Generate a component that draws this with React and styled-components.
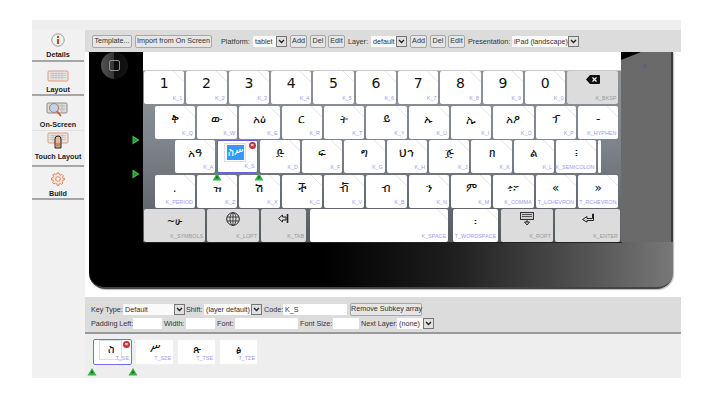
import React from "react";
import styled, { createGlobalStyle } from "styled-components";

const Global = createGlobalStyle`
  html, body { margin: 0; padding: 0; background: #fff; }
  body { font-family: "Liberation Sans", Arial, sans-serif; color: #333; }
`;
const Page = styled.div`
  width: 714px; height: 400px; padding: 20px 33px 22px 32px; box-sizing: border-box; overflow: hidden;
`;
const Shell = styled.div`
  display: flex; height: 358px; background: #eeeeee; padding-top: 10px; box-sizing: border-box;
`;
const Sidebar = styled.nav`
  width: 53px; flex: none; display: flex; flex-direction: column; background: #f1f1f1;
`;
const NavItem = styled.div`
  height: ${p => p.$h}px; box-sizing: border-box; display: flex; flex-direction: column; align-items: center;
  justify-content: flex-end; padding-bottom: ${p => p.$pb}px; margin-right: 1px;
  border-bottom: ${p => (p.$faint ? "1px solid #e2e2e2" : "2px solid #a6a6a6")};
  font-size: 7.2px; font-weight: bold; color: #222; white-space: nowrap; gap: 3px;
`;
const Main = styled.main`
  flex: 1; min-width: 0; display: flex; flex-direction: column;
`;
const Toolbar = styled.div`
  height: 22px; flex: none; background: #dcdcdc; display: flex; align-items: center; padding-left: 7px; box-sizing: border-box;
  font-size: 7.2px; color: #333; white-space: nowrap;
`;
const Btn = styled.button`
  font: inherit; color: #333; height: 11px; box-sizing: content-box; padding: 0; margin: 0 0 0 ${p => p.$ml || 0}px;
  width: ${p => p.$w}px; flex: none; background: #e6e6e6; border: 1px solid #a8a8a8; border-radius: 2px; line-height: 10px;
`;
const Label = styled.span`
  margin-left: ${p => p.$ml || 0}px; flex: none; width: ${p => p.$w ? p.$w + "px" : "auto"};
`;
const SelectBox = styled.span`
  margin-left: ${p => p.$ml || 0}px; width: ${p => p.$w}px; height: 11px; flex: none; display: flex; align-items: center;
  justify-content: space-between; background: #fafafa; box-sizing: border-box; font-size: 7.2px; padding-left: 2px;
`;
const SelectArrow = styled.span`
  width: 11px; height: 11px; flex: none; background: #e0e0e0; border: 1px solid #777; box-sizing: border-box;
  display: flex; align-items: center; justify-content: center;
`;
const Field = styled.span`
  margin-left: ${p => p.$ml || 0}px; width: ${p => p.$w}px; height: 11px; flex: none; background: #fff; box-sizing: border-box;
  padding-left: 2px; line-height: 11px; font-size: 7.2px;
`;
const Stage = styled.section`
  height: 245px; flex: none; background: #fff; padding: 0 8px 8px 4px; box-sizing: border-box;
`;
const Tablet = styled.div`
  position: relative; display: flex; height: 237px; box-sizing: border-box; padding-bottom: 45px;
  background: linear-gradient(90deg, #000 0, #000 40%, #1e1e1e 62%, #555 86%, #787878 100%);
  border-bottom: 2px solid #444; border-bottom-left-radius: 16px; border-bottom-right-radius: 16px;
  box-shadow: 1px 1px 1px #bbb;
`;
const LeftBezel = styled.div`
  width: 54px; flex: none; background: #000; padding-left: 12px; box-sizing: border-box;
`;
const HomeButton = styled.div`
  width: 27px; height: 27px; border-radius: 50%; display: flex; align-items: center; justify-content: center;
  background: linear-gradient(90deg, #525252 0, #333 50%, #0c0c0c 50%, #141414 100%);
`;
const HomeSquare = styled.div`
  width: 9px; height: 9px; border: 1px solid #8c8c8c; border-radius: 2px;
`;
const RightBezel = styled.div`
  position: relative; flex: 1; background: #6a6a6a; border-right: 2px solid #3c3c3c; display: flex; justify-content: center;
  padding-top: 12px; box-sizing: border-box;
  &::before {
    content: ""; position: absolute; left: 0; top: 0; width: 20px; height: 8px; background: #000;
    clip-path: polygon(0 0, 100% 0, 0 100%);
  }
`;
const Camera = styled.div`
  width: 4px; height: 4px; margin-right: 3px; border-radius: 50%; background: #5c6478;
`;
const Keyboard = styled.div`
  width: 478px; flex: none; box-sizing: border-box; padding: 19px 2px 1px 1px; display: flex; flex-direction: column; gap: 1.5px;
  background: linear-gradient(180deg, #fff 0, #fff 18px, #8f949b 19px, #7e848b 90px, #555a60 192px);
  box-shadow: 1px 1px 0 #222;
`;
const Row = styled.div`
  position: relative; display: flex; gap: 2px; height: 33px; padding-left: ${p => p.$offset || 0}px;
`;
const KeyCap = styled.div`
  position: relative; width: ${p => p.$w}px; height: 33px; flex: none; box-sizing: border-box; border-radius: 2px;
  margin-left: ${p => p.$ml || 0}px;
  background: ${p => (p.$special ? "#dcdcdc" : p.$spacer ? "#fff" : "linear-gradient(225deg, #fff 0, #fff 7px, #e8e8e8 7.5px, #e8e8e8 8px, #fff 8.5px)")};
  border: ${p => (p.$selected ? "1px solid #6464d8" : "none")};
  display: flex; justify-content: center; padding-top: ${p => (p.$digit ? 3 : 4)}px;
  font-family: "DejaVu Sans", "Noto Sans", sans-serif;
  font-size: ${p => (p.$digit ? 14 : p.$small ? 10 : 12)}px; line-height: 18px; color: #111;
`;
const KeyLabel = styled.span`
  position: absolute; right: 2px; bottom: 2px; font-family: "Liberation Sans", Arial, sans-serif; font-size: 5.4px; line-height: 7px;
  color: ${p => (p.$special ? "#9a9a9a" : "#9a9af0")}; white-space: nowrap;
`;
const Selected = styled.span`
  display: flex; align-items: center; justify-content: center; width: 22px; height: 19px; margin: -2px 5px 0 0;
  border: 1px solid #dedede; box-sizing: border-box; background: #fff; flex: none;
`;
const Highlight = styled.span`
  display: block; background: #3399ff; color: #fff; padding: 0 1px; font-size: 10px; line-height: 15px; white-space: nowrap;
`;
const Delete = styled.span`
  position: absolute; right: 1px; top: 1px; width: 7px; height: 7px; border-radius: 50%; background: #c0303c;
  color: #fff; font: bold 6px/7px "Liberation Sans", sans-serif; text-align: center;
`;
const SideMarker = styled.svg`
  position: absolute; left: -12px; top: ${p => p.$top}px;
`;
const UpMarker = styled.svg`
  position: absolute; left: ${p => p.$left}px; top: ${p => p.$top}px; z-index: 2;
`;
const Props = styled.section`
  height: 37px; flex: none; background: #dcdcdc; border-bottom: 2px solid #999; box-sizing: border-box; padding: 6px 0 0 6px;
  display: flex; flex-direction: column; gap: 2px; font-size: 7.2px; color: #333; white-space: nowrap;
`;
const PropRow = styled.div`
  display: flex; align-items: center; height: 12px;
`;
const Subkeys = styled.section`
  position: relative; flex: 1; display: flex; gap: 3px; padding: 5px 0 0 8px; align-items: flex-start;
`;
const SubKey = styled.div`
  position: relative; width: 39px; height: 26px; box-sizing: border-box; background: #fff; border-radius: 2px;
  border: ${p => (p.$selected ? "1px solid #6f6ff0" : "1px solid #f0f0f0")};
  display: flex; justify-content: center; padding-top: 4px; font: 11px/12px "DejaVu Sans", "Noto Sans", sans-serif; color: #111;
`;
const SubInner = styled.span`
  width: 23px; height: 20px; margin: -4px 4px 0 0; border: 1px solid #dedede; box-sizing: border-box; text-align: center; padding-top: 3px;
`;

const down = (
  <svg width="7" height="5" viewBox="0 0 7 5"><path d="M1 1l2.5 2.5L6 1" fill="none" stroke="#222" strokeWidth="1.4" /></svg>
);
const Sel = ({ w, ml, children }) => (
  <SelectBox $w={w} $ml={ml}>{children}<SelectArrow>{down}</SelectArrow></SelectBox>
);

const Right = ({ top }) => (
  <SideMarker $top={top} width="8" height="10" viewBox="0 0 8 10">
    <path d="M0.5 0.5L7.5 5L0.5 9.5Z" fill="#3fc04a" />
    <path d="M2 3.6L4.4 5L2 6.4Z" fill="#0d5" stroke="#1a6a22" strokeWidth=".6" />
  </SideMarker>
);
const Up = ({ left, top }) => (
  <UpMarker $left={left} $top={top} width="10" height="8" viewBox="0 0 10 8">
    <path d="M5 0L9.5 7.5H0.5Z" fill="#35b445" />
    <path d="M5 2.4L6.6 5.2H3.4Z" fill="#106a20" />
  </UpMarker>
);

const Kb = ({ color = "#e59a7a" }) => (
  <g fill="none">
    <rect x="1" y="1" width="20" height="10" rx="1" fill="#e4e4e4" stroke={color} />
    <path d="M3 3.5h16M3 5.5h16M3 7.5h16M6 2.5v7M9 2.5v7M12 2.5v7M15 2.5v7" stroke="#bdbdbd" strokeWidth=".7" />
  </g>
);
const InfoIcon = () => (
  <svg width="14" height="14" viewBox="0 0 14 14">
    <circle cx="7" cy="7" r="6.2" fill="#f5f5f5" stroke="#999" />
    <circle cx="7" cy="3.9" r="1.2" fill="#d8401c" />
    <path d="M7 6v5" stroke="#d8401c" strokeWidth="2.2" />
  </svg>
);
const LayoutIcon = () => <svg width="22" height="12" viewBox="0 0 22 12"><Kb /></svg>;
const ScreenIcon = () => (
  <svg width="24" height="15" viewBox="0 0 24 15">
    <rect x="1" y="1" width="20" height="10" rx="1" fill="#ddd" stroke="#8a8a8a" />
    <path d="M3 4h16M3 7h16M8 2v8M12 2v8M16 2v8" stroke="#aaa" strokeWidth=".7" />
    <circle cx="8" cy="6" r="4.5" fill="#bcd4ee" stroke="#c07a5a" />
    <path d="M11 9.5l4 4.5" stroke="#d0551f" strokeWidth="1.6" />
  </svg>
);
const TouchIcon = () => (
  <svg width="22" height="17" viewBox="0 0 22 17">
    <Kb />
    <path d="M8 16V7a3 3 0 016 0v9Z" fill="#e8b795" stroke="#222" strokeWidth="1" />
    <rect x="9" y="11" width="4" height="3.5" fill="#c58a66" />
  </svg>
);
const GearIcon = () => (
  <svg width="14" height="14" viewBox="0 0 14 14">
    <path d="M6 1h2l.3 1.6 1.3.6 1.4-.9 1.4 1.4-.9 1.4.6 1.3L13.3 6v2l-1.6.3-.6 1.3.9 1.4-1.4 1.4-1.4-.9-1.3.6L8 13.3H6l-.3-1.6-1.3-.6-1.4.9-1.4-1.4.9-1.4-.6-1.3L.5 8V6l1.6-.3.6-1.3-.9-1.4 1.4-1.4 1.4.9 1.3-.6Z" fill="#f3e6dc" stroke="#d98a62" />
    <circle cx="7" cy="7" r="2.3" fill="#f5f5f5" stroke="#d98a62" />
  </svg>
);
const Backspace = () => (
  <svg width="14" height="9" viewBox="0 0 14 9">
    <path d="M4 0h9a1 1 0 011 1v7a1 1 0 01-1 1H4L0 4.5Z" fill="#111" />
    <path d="M6.5 2.5l4 4M10.5 2.5l-4 4" stroke="#fff" strokeWidth="1.2" />
  </svg>
);
const Globe = () => (
  <svg width="14" height="14" viewBox="0 0 14 14" style={{ marginTop: -1 }}>
    <circle cx="7" cy="7" r="6.3" fill="#ddd" stroke="#222" />
    <path d="M1 5h12M1 9h12M7 1v12" stroke="#222" strokeWidth=".8" />
    <ellipse cx="7" cy="7" rx="3" ry="6.3" fill="none" stroke="#222" strokeWidth=".8" />
  </svg>
);
const TabIcon = () => (
  <svg width="11" height="11" viewBox="0 0 11 11">
    <path d="M0.5 5.5L4.5 2v2H8v3H4.5v2Z" fill="none" stroke="#222" />
    <path d="M9.5 1v9" stroke="#222" strokeWidth="1.6" />
  </svg>
);
const RoptIcon = () => (
  <svg width="14" height="14" viewBox="0 0 14 14" style={{ marginTop: -1 }}>
    <rect x="0.5" y="0.5" width="13" height="7" fill="#ccc" stroke="#333" />
    <path d="M2 2.5h10M2 4.5h10" stroke="#555" />
    <path d="M7 8v2M4.5 10h5L7 13Z" fill="none" stroke="#222" />
  </svg>
);
const EnterIcon = () => (
  <svg width="13" height="10" viewBox="0 0 13 10">
    <path d="M11.5 1v4.5H6V3.5L1.5 6.5 6 9.2V7.5h6.5V1Z" fill="none" stroke="#222" />
  </svg>
);

const K = 40.35;
const row1 = [["1","K_1"],["2","K_2"],["3","K_3"],["4","K_4"],["5","K_5"],["6","K_6"],["7","K_7"],["8","K_8"],["9","K_9"],["0","K_0"]];
const row2 = [["ቅ","K_Q"],["ው","K_W"],["አዕ","K_E"],["ር","K_R"],["ት","K_T"],["ይ","K_Y"],["ኡ","K_U"],["ኢ","K_I"],["አዖ","K_O"],["ፕ","K_P"],["-","K_HYPHEN"]];
const row3 = [["አዓ","K_A"],["ስሥ","K_S"],["ድ","K_D"],["ፍ","K_F"],["ግ","K_G"],["ህኅ","K_H"],["ጅ","K_J"],["ክ","K_K"],["ል","K_L"],["፧","K_SEMICOLON"]];
const row4 = [[".","K_PERIOD"],["ዝ","K_Z"],["ሽ","K_X"],["ች","K_C"],["ቭ","K_V"],["ብ","K_B"],["ን","K_N"],["ም","K_M"],["፥፦","K_COMMA"],["«","T_LCHEVRON"],["»","T_RCHEVRON"]];

const navs = [
  { h: 32, pb: 1, icon: <InfoIcon />, label: "Details" },
  { h: 34, pb: 0, icon: <LayoutIcon />, label: "Layout" },
  { h: 35, pb: 1, icon: <ScreenIcon />, label: "On-Screen", faint: true },
  { h: 36, pb: 4, icon: <TouchIcon />, label: "Touch Layout" },
  { h: 33, pb: 0, icon: <GearIcon />, label: "Build" },
];
const subs = [["ስ","T_SE"],["ሥ","T_SZE"],["ጽ","T_TSE"],["ፅ","T_TZE"]];

export default function App() {
  return (
    <Page>
      <Global />
      <Shell>
        <Sidebar>
          {navs.map(n => (
            <NavItem key={n.label} $h={n.h} $pb={n.pb} $faint={n.faint}>{n.icon}<span>{n.label}</span></NavItem>
          ))}
        </Sidebar>
        <Main>
          <Toolbar>
            <Btn $w={38}>Template...</Btn>
            <Btn $w={75} $ml={3}>Import from On Screen</Btn>
            <Label $ml={9} $w={32}>Platform:</Label>
            <Sel w={34}>tablet</Sel>
            <Btn $w={15} $ml={3}>Add</Btn>
            <Btn $w={14} $ml={3}>Del</Btn>
            <Btn $w={15} $ml={2}>Edit</Btn>
            <Label $ml={3} $w={23}>Layer:</Label>
            <Sel w={36}>default</Sel>
            <Btn $w={15} $ml={3}>Add</Btn>
            <Btn $w={14} $ml={3}>Del</Btn>
            <Btn $w={15} $ml={2}>Edit</Btn>
            <Label $ml={3} $w={44}>Presentation:</Label>
            <Sel w={66}>iPad (landscape)</Sel>
          </Toolbar>
          <Stage>
            <Tablet>
              <LeftBezel><HomeButton><HomeSquare /></HomeButton></LeftBezel>
              <Keyboard>
                <Row>
                  {row1.map(([g, l]) => <KeyCap key={l} $w={K} $digit>{g}<KeyLabel>{l}</KeyLabel></KeyCap>)}
                  <KeyCap $w={51} $special><Backspace /><KeyLabel $special>K_BKSP</KeyLabel></KeyCap>
                </Row>
                <Row $offset={10.5}>
                  {row2.map(([g, l]) => <KeyCap key={l} $w={K}>{g}<KeyLabel>{l}</KeyLabel></KeyCap>)}
                </Row>
                <Row $offset={31}>
                  <Right top={-5} />
                  {row3.map(([g, l]) =>
                    l === "K_S" ? (
                      <KeyCap key={l} $w={K} $selected>
                        <Selected><Highlight>{g}</Highlight></Selected>
                        <Delete>×</Delete>
                        <KeyLabel>{l}</KeyLabel>
                      </KeyCap>
                    ) : (
                      <KeyCap key={l} $w={K}>{g}<KeyLabel>{l}</KeyLabel></KeyCap>
                    )
                  )}
                  <KeyCap $w={3} $spacer />
                </Row>
                <Row $offset={10.5}>
                  <Right top={-6} />
                  <Up left={68} top={-2} />
                  <Up left={110} top={-2} />
                  {row4.map(([g, l]) => <KeyCap key={l} $w={K}>{g}<KeyLabel>{l}</KeyLabel></KeyCap>)}
                </Row>
                <Row>
                  <KeyCap $w={61} $special $small>~ሁ<KeyLabel $special>K_SYMBOLS</KeyLabel></KeyCap>
                  <KeyCap $w={52} $special><Globe /><KeyLabel $special>K_LOPT</KeyLabel></KeyCap>
                  <KeyCap $w={45} $special><TabIcon /><KeyLabel $special>K_TAB</KeyLabel></KeyCap>
                  <KeyCap $w={138} $ml={2}><KeyLabel>K_SPACE</KeyLabel></KeyCap>
                  <KeyCap $w={45} $ml={3}>፡<KeyLabel>T_WORDSPACE</KeyLabel></KeyCap>
                  <KeyCap $w={52} $ml={1} $special><RoptIcon /><KeyLabel $special>K_ROPT</KeyLabel></KeyCap>
                  <KeyCap $w={65} $special><EnterIcon /><KeyLabel $special>K_ENTER</KeyLabel></KeyCap>
                </Row>
              </Keyboard>
              <RightBezel><Camera /></RightBezel>
            </Tablet>
          </Stage>
          <Props>
            <PropRow>
              <Label $w={32}>Key Type:</Label>
              <Sel w={62}>Default</Sel>
              <Label $ml={1} $w={17}>Shift:</Label>
              <Sel w={58} ml={1}>(layer default)</Sel>
              <Label $ml={2} $w={18}>Code:</Label>
              <Field $w={64} $ml={1}>K_S</Field>
              <Btn $w={70} $ml={3}>Remove Subkey array</Btn>
            </PropRow>
            <PropRow>
              <Label $w={42}>Padding Left:</Label>
              <Field $w={29} />
              <Label $ml={2} $w={22}>Width:</Label>
              <Field $w={29} />
              <Label $ml={2} $w={18}>Font:</Label>
              <Field $w={63} />
              <Label $ml={2} $w={33}>Font Size:</Label>
              <Field $w={26} />
              <Label $ml={2} $w={36}>Next Layer:</Label>
              <Sel w={37}>(none)</Sel>
            </PropRow>
          </Props>
          <Subkeys>
            {subs.map(([g, l], i) =>
              i === 0 ? (
                <SubKey key={l} $selected>
                  <SubInner>{g}</SubInner>
                  <Delete>×</Delete>
                  <KeyLabel>{l}</KeyLabel>
                </SubKey>
              ) : (
                <SubKey key={l}>{g}<KeyLabel>{l}</KeyLabel></SubKey>
              )
            )}
            <Up left={2} top={34} />
            <Up left={43} top={34} />
          </Subkeys>
        </Main>
      </Shell>
    </Page>
  );
}
